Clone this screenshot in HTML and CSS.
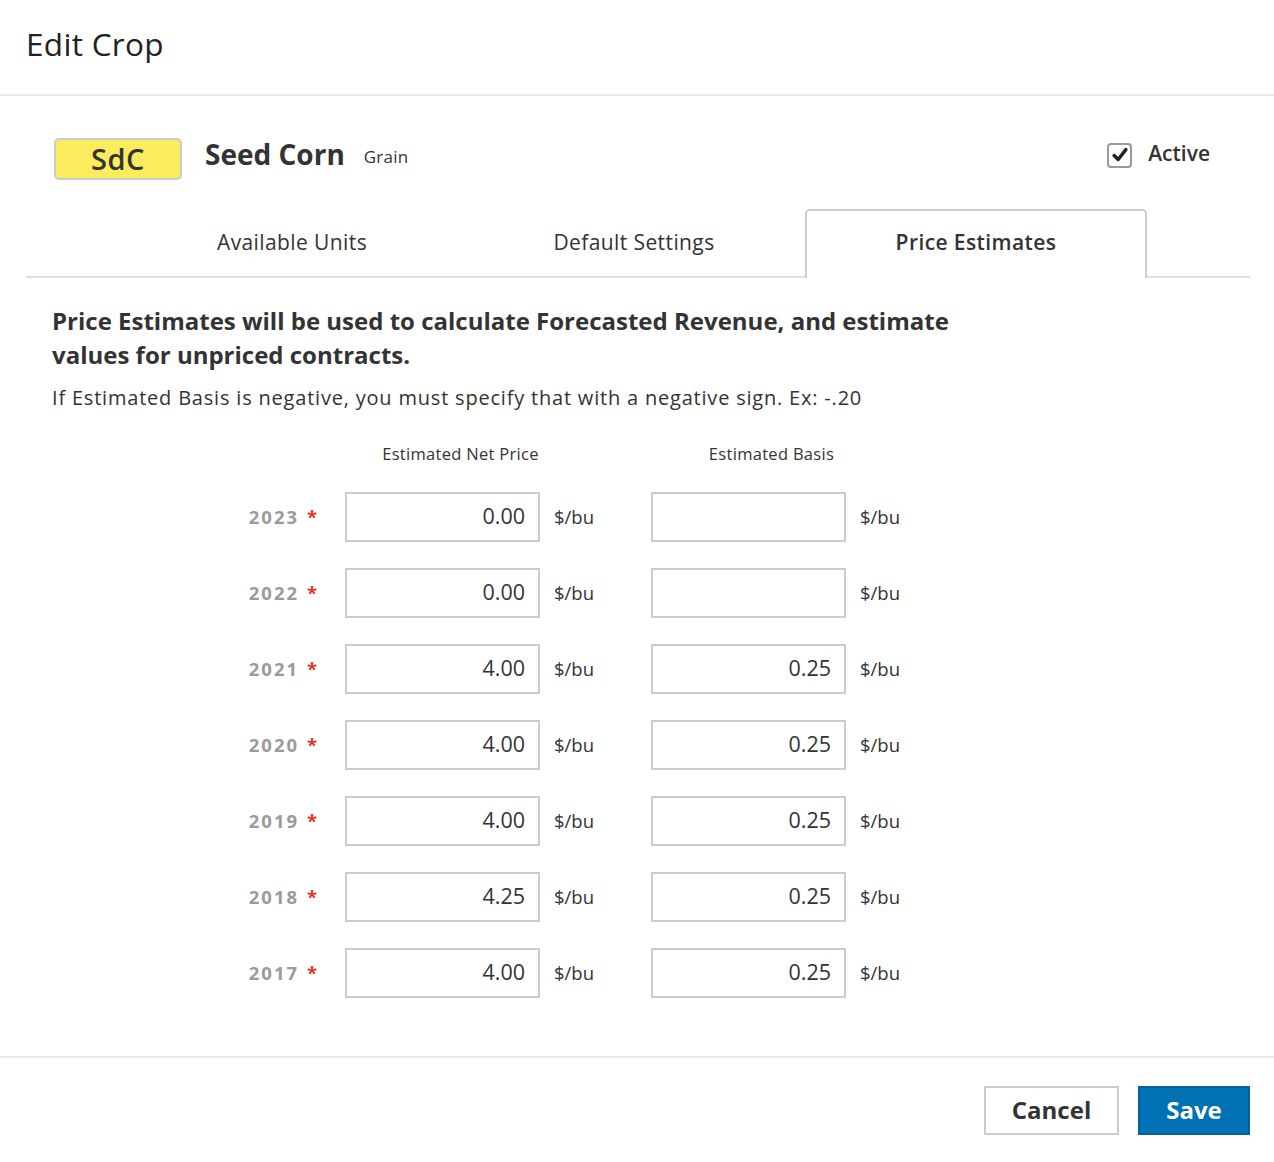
FILE: index.html
```html
<!DOCTYPE html>
<html>
<head>
<meta charset="utf-8">
<link rel="stylesheet" href="styles.css">
</head>
<body>
<div class="modal">
  <div class="modal-header"><h1 class="title">Edit Crop</h1></div>
  <div class="modal-body">
    <div class="crop-row">
      <div class="crop-id">
        <span class="badge">SdC</span>
        <span class="crop-name">Seed Corn</span>
        <span class="crop-type">Grain</span>
      </div>
      <label class="active">
        <span class="checkbox"><svg viewBox="0 0 20 20" width="18" height="18"><path d="M3.5 10.5 L8 15 L16.5 4" fill="none" stroke="#222" stroke-width="3.8" stroke-linecap="round" stroke-linejoin="round"/></svg></span>
        <span class="active-label">Active</span>
      </label>
    </div>
    <div class="tabs">
      <div class="tab">Available Units</div>
      <div class="tab">Default Settings</div>
      <div class="tab tab-active">Price Estimates</div>
    </div>
    <div class="panel">
      <h2 class="lead">Price Estimates will be used to calculate Forecasted Revenue, and estimate values for unpriced contracts.</h2>
      <p class="hint">If Estimated Basis is negative, you must specify that with a negative sign. Ex: -.20</p>
      <div class="grid">
        <div></div>
        <div class="col-head col-head-price">Estimated Net Price</div>
        <div></div>
        <div class="col-head col-head-basis">Estimated Basis</div>
        <div></div>

        <div class="year">2023 <span class="req">*</span></div>
        <div class="field">0.00</div><div class="unit">$/bu</div>
        <div class="field"></div><div class="unit">$/bu</div>

        <div class="year">2022 <span class="req">*</span></div>
        <div class="field">0.00</div><div class="unit">$/bu</div>
        <div class="field"></div><div class="unit">$/bu</div>

        <div class="year">2021 <span class="req">*</span></div>
        <div class="field">4.00</div><div class="unit">$/bu</div>
        <div class="field">0.25</div><div class="unit">$/bu</div>

        <div class="year">2020 <span class="req">*</span></div>
        <div class="field">4.00</div><div class="unit">$/bu</div>
        <div class="field">0.25</div><div class="unit">$/bu</div>

        <div class="year">2019 <span class="req">*</span></div>
        <div class="field">4.00</div><div class="unit">$/bu</div>
        <div class="field">0.25</div><div class="unit">$/bu</div>

        <div class="year">2018 <span class="req">*</span></div>
        <div class="field">4.25</div><div class="unit">$/bu</div>
        <div class="field">0.25</div><div class="unit">$/bu</div>

        <div class="year">2017 <span class="req">*</span></div>
        <div class="field">4.00</div><div class="unit">$/bu</div>
        <div class="field">0.25</div><div class="unit">$/bu</div>
      </div>
    </div>
  </div>
  <div class="modal-footer">
    <button class="btn btn-cancel">Cancel</button>
    <button class="btn btn-save">Save</button>
  </div>
</div>
</body>
</html>
```

FILE: styles.css
```css
* { box-sizing: border-box; }
html, body { margin: 0; padding: 0; background: #fff; }
body {
  font-family: "Open Sans", "Noto Sans", "Liberation Sans", sans-serif;
  color: #333;
}
.modal { width: 1274px; }
.modal-header {
  height: 96px;
  border-bottom: 2px solid #e8e8e8;
  display: flex;
  align-items: center;
  padding-left: 26px;
}
.title {
  margin: 0;
  font-size: 31.5px;
  font-weight: 400;
  color: #222;
  line-height: 1;
  letter-spacing: 0.3px;
  position: relative;
  top: -3px;
}
.modal-body { padding: 0 24px 0 26px; }
.crop-row {
  margin-top: 42px;
  display: flex;
  justify-content: space-between;
  align-items: center;
  padding: 0 40px 0 28px;
}
.crop-id { display: flex; align-items: center; }
.badge {
  width: 128px;
  height: 42px;
  background: #fbec5e;
  border: 2px solid #ccc;
  border-radius: 5px;
  display: flex;
  align-items: center;
  justify-content: center;
  font-size: 29px;
  font-weight: 600;
  letter-spacing: 0.5px;
  color: #333;
  padding-bottom: 2px;
}
.crop-name {
  margin-left: 23px;
  font-size: 28px;
  font-weight: 700;
  color: #333;
  position: relative;
  top: -5px;
}
.crop-type { margin-left: 19px; font-size: 17px; color: #333; letter-spacing: 0.2px; position: relative; top: -3px; }
.active { display: flex; align-items: center; position: relative; top: -4px; }
.checkbox {
  width: 25px; height: 25px;
  border: 2px solid #999;
  border-radius: 4px;
  display: flex; align-items: center; justify-content: center;
}
.active-label { margin-left: 16px; font-size: 21px; font-weight: 600; color: #333; padding-bottom: 4px; }
.tabs {
  margin-top: 29px;
  height: 69px;
  border-bottom: 2px solid #ddd;
  display: flex;
  justify-content: center;
  padding-right: 8px;
}
.tab {
  width: 342px;
  display: flex;
  align-items: center;
  justify-content: center;
  font-size: 21px;
  letter-spacing: 0.4px;
  color: #333;
  padding-bottom: 1px;
}
.tab-active {
  border: 2px solid #ccc;
  border-bottom: none;
  border-radius: 5px 5px 0 0;
  background: #fff;
  margin-bottom: -2px;
  font-weight: 600;
  padding-bottom: 5px;
}
.panel { padding: 0 26px; }
.lead {
  margin: 26px 0 0;
  max-width: 960px;
  font-size: 24px;
  line-height: 34px;
  font-weight: 700;
  color: #333;
}
.hint {
  margin: 12px 0 0;
  font-size: 20px;
  line-height: 28px;
  letter-spacing: 0.8px;
  color: #333;
}
.grid {
  margin-top: 32px;
  margin-left: 145px;
  display: grid;
  grid-template-columns: 148px 195px 111px 195px 80px;
  row-gap: 26px;
  align-items: center;
}
.col-head {
  display: flex;
  justify-content: center;
  white-space: nowrap;
  font-size: 16.5px;
  line-height: 20px;
  letter-spacing: 0.3px;
  color: #333;
  margin-bottom: 2px;
}
.col-head-price { padding-left: 36px; }
.col-head-basis { padding-left: 46px; }
.year {
  text-align: right;
  padding-right: 28px;
  padding-bottom: 2px;
  font-size: 18.5px;
  font-weight: 700;
  color: #9a9a9a;
  letter-spacing: 2px;
}
.req { color: #e0342b; margin-left: 1px; letter-spacing: 0; }
.field {
  height: 50px;
  border: 2px solid #ccc;
  display: flex;
  align-items: center;
  justify-content: flex-end;
  padding: 0 13px 3px;
  font-size: 21.5px;
  color: #333;
}
.unit { padding-left: 14px; padding-bottom: 2px; font-size: 18.5px; color: #333; }
.modal-footer {
  margin-top: 58px;
  border-top: 2px solid #e8e8e8;
  display: flex;
  justify-content: flex-end;
  gap: 19px;
  padding: 28px 24px 27px;
}
.btn {
  height: 49px;
  font-family: inherit;
  font-size: 24px;
  font-weight: 700;
  padding: 0 0 3px;
  border-radius: 0;
}
.btn-cancel {
  width: 135px;
  background: #fff;
  border: 2px solid #ccc;
  color: #333;
}
.btn-save {
  width: 112px;
  background: #0071b3;
  border: 2px solid #06619a;
  color: #fff;
}
```
